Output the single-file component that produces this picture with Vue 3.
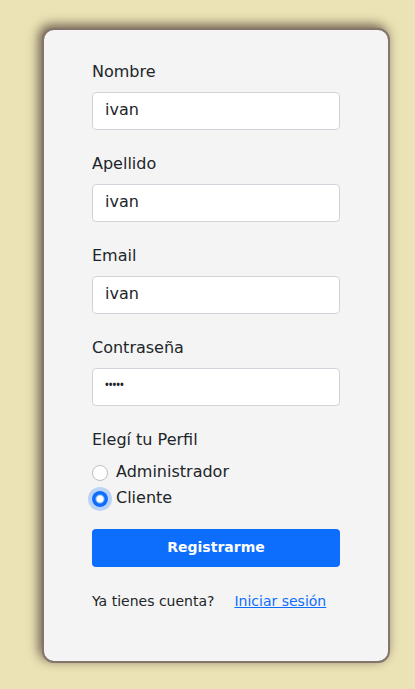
<script setup>
import { ref } from 'vue'

const fields = ref([
  { id: 'nombre', label: 'Nombre', type: 'text', value: 'ivan' },
  { id: 'apellido', label: 'Apellido', type: 'text', value: 'ivan' },
  { id: 'email', label: 'Email', type: 'text', value: 'ivan' },
  { id: 'password', label: 'Contraseña', type: 'password', value: '12345' },
])
const perfiles = ['Administrador', 'Cliente']
const perfil = ref('Cliente')
</script>

<template>
  <main class="page">
    <form class="card" @submit.prevent>
      <div v-for="field in fields" :key="field.id" class="field">
        <label class="label" :for="field.id">{{ field.label }}</label>
        <input :id="field.id" v-model="field.value" class="control" :type="field.type" />
      </div>
      <fieldset class="profiles">
        <legend class="label">Elegí tu Perfil</legend>
        <label v-for="p in perfiles" :key="p" class="option">
          <input v-model="perfil" class="radio" type="radio" name="perfil" :value="p" />
          <span>{{ p }}</span>
        </label>
      </fieldset>
      <button class="submit" type="submit">Registrarme</button>
      <p class="footer">
        <span>Ya tienes cuenta?</span>
        <a class="link" href="#">Iniciar sesión</a>
      </p>
    </form>
  </main>
</template>

<style>
body {
  margin: 0;
  background: #ebe3b5;
}
</style>

<style scoped>
.page {
  box-sizing: border-box;
  min-height: 100vh;
  padding: 28px 25px 26px 42px;
  font-family: "DejaVu Sans", sans-serif;
  font-size: 16px;
  line-height: 24px;
  color: #212529;
}
.card {
  padding: 30px 48px 49px;
  border: 2px solid #84746b;
  border-radius: 12px;
  background: #f4f4f4;
  box-shadow: -3px -3px 12px #66564a;
}
.field {
  margin-bottom: 22px;
}
.label {
  display: block;
  margin-bottom: 8px;
  padding: 0;
}
.control {
  display: block;
  box-sizing: border-box;
  width: 100%;
  height: 38px;
  padding: 4px 12px 8px;
  border: 1px solid #ced4da;
  border-radius: 4px;
  background: #fff;
  color: #212529;
  font: inherit;
}
.control[type="password"] {
  padding: 3px 12px 9px;
  font-family: "Noto Sans", sans-serif;
  font-size: 10px;
  font-weight: 700;
}
.profiles {
  min-width: 0;
  margin: 0 0 17px;
  padding: 0;
  border: 0;
}
.option {
  display: flex;
  align-items: center;
  gap: 8px;
  height: 26px;
}
.option span {
  padding-bottom: 2px;
}
.radio {
  appearance: none;
  box-sizing: border-box;
  flex: none;
  width: 16px;
  height: 16px;
  margin: 0;
  border: 1px solid #bfbfbf;
  border-radius: 50%;
  background: #fff;
}
.radio:checked {
  border: 0;
  background: radial-gradient(circle, #fff 3px, #0d6efd 5px);
  box-shadow: 0 0 0 4px #bad3f7;
}
.submit {
  display: block;
  width: 100%;
  height: 38px;
  padding: 0 12px 2px;
  border: 0;
  border-radius: 4px;
  background: #0d6efd;
  color: #fff;
  font: inherit;
  font-size: 14px;
  font-weight: 700;
}
.footer {
  display: flex;
  gap: 20px;
  margin: 24px 0 0;
  font-size: 14px;
  line-height: 21px;
  white-space: nowrap;
}
.link {
  color: #0d6efd;
}
</style>
